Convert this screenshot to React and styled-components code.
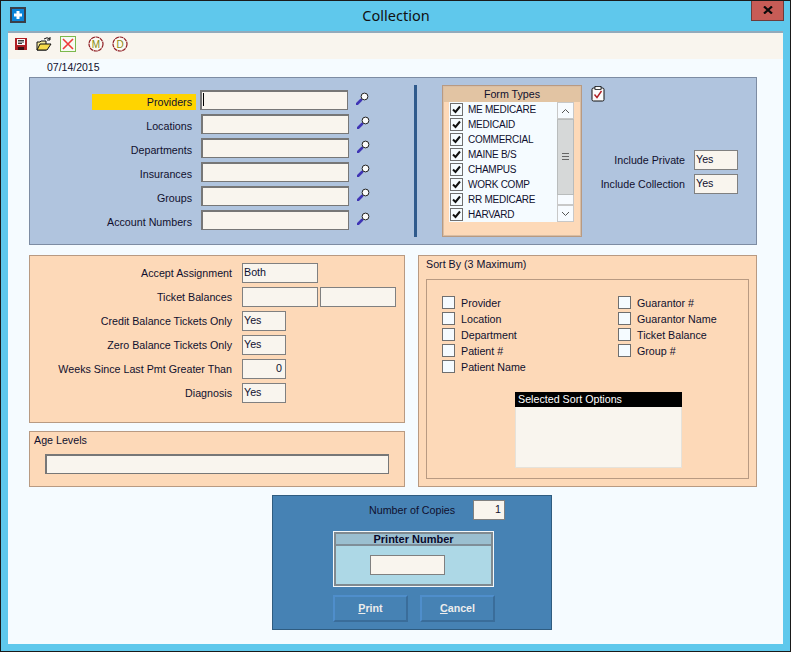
import React from 'react'
import styled, { createGlobalStyle } from 'styled-components'

const Global = createGlobalStyle`
  html, body { margin: 0; padding: 0; background: #5fc8ec; }
  body { font-family: "Liberation Sans", Arial, sans-serif; font-size: 10.7px; color: #10102e; }
  * { box-sizing: border-box; }
`
const Win = styled.div`
  width: 791px;
  height: 652px;
  border: 1px solid #1a1a1a;
  background: #5fc8ec;
  display: flex;
  flex-direction: column;
  overflow: hidden;
`
const TitleBar = styled.div`
  height: 30px;
  flex: none;
  display: flex;
  align-items: flex-start;
  position: relative;
`
const AppIcon = styled.div`
  width: 16px;
  height: 16px;
  margin: 6px 0 0 9px;
  background: #0a84d8;
  border: 2px solid #3a3f48;
  display: flex;
  align-items: center;
  justify-content: center;
`
const Title = styled.div`
  flex: 1;
  text-align: center;
  font: 14.5px "Noto Sans", "Open Sans", sans-serif;
  color: #111;
  padding: 4px 0 0 15px;
`
const CloseBtn = styled.div`
  width: 33px;
  height: 21px;
  margin-right: 6px;
  margin-top: -1px;
  background: #c75c56;
  border: 1px solid #6d3b3b;
  border-top: 0;
  display: flex;
  align-items: center;
  justify-content: center;
`
const Client = styled.div`
  width: 775px;
  height: 613px;
  margin-left: 7px;
  background: #f5fbff;
  border-top: 2px solid #93aabb;
`
const Toolbar = styled.div`
  height: 26px;
  background: #f9f5ee;
  display: flex;
  align-items: flex-start;
  padding: 3px 0 0 5px;
`
const Tool = styled.div`
  width: 16px;
  height: 16px;
  margin-left: ${p => p.$gap || 0}px;
  display: flex;
`
const DateRow = styled.div`
  height: 18px;
  padding: 1px 0 0 39px;
  font-size: 10.5px;
  line-height: 14px;
`
const Main = styled.div`
  width: 728px;
  margin-left: 21px;
`
const BluePanel = styled.div`
  height: 168px;
  background: #b0c4de;
  border: 1px solid #7d8ca3;
  display: flex;
  align-items: flex-start;
`
const ProviderCol = styled.div`
  padding: 12px 0 0 62px;
  display: flex;
  flex-direction: column;
  gap: 4px;
`
const ProviderRow = styled.div`
  height: 20px;
  display: flex;
  align-items: center;
`
const ProviderLabel = styled.div`
  width: 104px;
  height: 16px;
  margin-top: 3px;
  padding-right: 4px;
  line-height: 16px;
  text-align: right;
  background: ${p => (p.$active ? '#ffd400' : 'transparent')};
`
const Field = styled.div`
  width: ${p => p.$w}px;
  height: 20px;
  flex: none;
  background: #f9f5ee;
  border: ${p => (p.$thin ? '1px solid #808080' : '2px solid #777')};
  border-right-width: 1px;
  border-bottom-width: 1px;
  padding: 0 ${p => (p.$right ? 3 : 1)}px;
  line-height: 16px;
  text-align: ${p => (p.$right ? 'right' : 'left')};
  color: #10102e;
  margin-left: ${p => p.$ml || 0}px;
`
const Caret = styled.div`
  width: 1px;
  height: 13px;
  margin-top: 1px;
  background: #000;
`
const LookupIcon = styled.svg`
  width: 13px;
  height: 13px;
  margin-left: 8px;
  margin-top: -3px;
  flex: none;
`
const Divider = styled.div`
  width: 3px;
  height: 152px;
  margin: 7px 0 0 44px;
  background: #2f5a8c;
`
const FormBox = styled.div`
  width: 140px;
  height: 152px;
  margin: 7px 0 0 25px;
  background: #fdd9b8;
  border: 1px solid #b89a82;
  outline: 1px solid #d9bea4;
  outline-offset: -2px;
`
const FormHead = styled.div`
  height: 15px;
  margin: 1px 1px 0;
  background: #e2c4a3;
  text-align: center;
  line-height: 15px;
`
const FormList = styled.div`
  width: 125px;
  height: 120px;
  margin-left: 6px;
  background: #f5fbff;
  position: relative;
  display: flex;
`
const FormRows = styled.div`
  flex: 1;
  padding-left: 1px;
`
const FormRow = styled.div`
  height: 15px;
  padding-top: 1px;
  display: flex;
  align-items: flex-start;
  gap: 5px;
  font-size: 10px;
  letter-spacing: -0.25px;
  line-height: 14px;
`
const Check = styled.div`
  width: 13px;
  height: 13px;
  flex: none;
  border: 1px solid #6f6f6f;
  background: #f5fbff;
  display: flex;
`
const Scroll = styled.div`
  width: 17px;
  display: flex;
  flex-direction: column;
`
const ScrollBtn = styled.div`
  height: ${p => p.$h}px;
  border: 1px solid #c8c8c8;
  background: #f7fbff;
  display: flex;
  align-items: center;
  justify-content: center;
`
const ScrollGap = styled(ScrollBtn)`
  border-top: 0;
`
const Thumb = styled.div`
  height: 76px;
  background: #d6d8d8;
  border: 1px solid #b9bcbc;
  display: flex;
  flex-direction: column;
  align-items: center;
  justify-content: center;
  gap: 1px;
`
const Grip = styled.div`
  width: 7px;
  height: 1px;
  background: #666;
  margin-bottom: 1px;
`
const IncludeCol = styled.div`
  width: 147px;
  margin: 8px 0 0 9px;
  display: flex;
  flex-direction: column;
`
const IncludeRows = styled.div`
  margin-top: 48px;
  display: flex;
  flex-direction: column;
  gap: 4px;
`
const IncludeRow = styled.div`
  display: flex;
  justify-content: flex-end;
  align-items: center;
  gap: 9px;
`
const Middle = styled.div`
  margin-top: 10px;
  display: grid;
  grid-template-columns: 376px 339px;
  column-gap: 13px;
`
const Stack = styled.div`
  display: flex;
  flex-direction: column;
  gap: 8px;
`
const Peach = styled.div`
  height: ${p => p.$h}px;
  background: #fdd9b8;
  border: 1px solid #b89a82;
`
const FilterPanel = styled(Peach)`
  padding-top: 7px;
  display: flex;
  flex-direction: column;
  gap: 4px;
`
const FilterRow = styled.div`
  height: 20px;
  display: flex;
  align-items: center;
`
const FilterLabel = styled.div`
  width: 202px;
  margin-right: 10px;
  text-align: right;
`
const AgeTitle = styled.div`
  padding: 1px 0 0 4px;
  height: 22px;
  line-height: 14px;
`
const SortTitle = styled.div`
  padding: 1px 0 0 7px;
  height: 23px;
  line-height: 14px;
`
const SortInner = styled.div`
  width: 323px;
  height: 200px;
  margin-left: 7px;
  border: 1px solid #b89a82;
  padding: 16px 0 0 15px;
`
const SortGrid = styled.div`
  display: grid;
  grid-template-columns: 176px 1fr;
  height: 80px;
`
const SortCol = styled.div`
  display: flex;
  flex-direction: column;
`
const SortItem = styled.div`
  height: 16px;
  display: flex;
  align-items: flex-start;
  gap: ${p => p.$gap}px;
  line-height: 14px;
`
const Selected = styled.div`
  width: 167px;
  height: 76px;
  margin: 16px 0 0 73px;
  background: #f9f5ee;
  border: 1px solid #e6e2da;
`
const SelectedHead = styled.div`
  height: 15px;
  margin: -1px -1px 0;
  background: #000;
  color: #fff;
  padding-left: 3px;
  line-height: 15px;
`
const PrintPanel = styled.div`
  width: 280px;
  height: 135px;
  margin: 8px 0 0 243px;
  background: #4682b4;
  border: 1px solid #2f5c80;
  padding: 4px 0 0 60px;
`
const CopiesRow = styled.div`
  display: flex;
  align-items: center;
  height: 20px;
`
const CopiesLabel = styled.div`
  width: 104px;
  margin-left: 36px;
`
const PrinterBox = styled.div`
  width: 161px;
  height: 56px;
  margin-top: 11px;
  background: #add8e6;
  border: 1px solid #f4f8fa;
  box-shadow: inset 0 0 0 2px #808a90;
  padding: 2px;
`
const PrinterHead = styled.div`
  height: 12px;
  background: #9bbfd0;
  border-bottom: 2px solid #7f8e98;
  font-size: 11px;
  font-weight: bold;
  text-align: center;
  line-height: 10px;
  color: #08082a;
`
const PrinterBody = styled.div`
  display: flex;
  padding: 9px 0 0 34px;
`
const Buttons = styled.div`
  margin-top: 8px;
  display: flex;
  gap: 12px;
`
const PrintBtn = styled.div`
  width: 75px;
  height: 27px;
  background: #4682b4;
  border: 2px solid #3a6d9a;
  border-top-color: #4f8ecb;
  border-left-color: #4f8ecb;
  color: #ececec;
  font-weight: bold;
  text-align: center;
  line-height: 23px;
  u { text-decoration: underline; }
`

const Lookup = () => (
  <LookupIcon viewBox="0 0 13 13">
    <path d="M1 12 L5 8" stroke="#3f35b5" strokeWidth="2.6" strokeLinecap="round" />
    <circle cx="8.5" cy="4.5" r="3.4" fill="#fbfbfb" stroke="#222" strokeWidth="1" />
  </LookupIcon>
)

const Tick = () => (
  <svg viewBox="0 0 11 11" width="11" height="11">
    <path d="M2 5.5 L4.5 8 L9 2.5" fill="none" stroke="#111" strokeWidth="2" />
  </svg>
)

const Badge = ({ letter }) => (
  <svg viewBox="0 0 16 16" width="16" height="16">
    <circle cx="8" cy="8" r="7" fill="#fbfaf2" stroke="#8e1c22" strokeWidth="1.2" strokeDasharray="4 0.6" />
    <text x="8" y="11.5" textAnchor="middle" fontSize="10" fontFamily="Liberation Sans" fill="#8a8a10">{letter}</text>
  </svg>
)

const formTypes = ['ME MEDICARE', 'MEDICAID', 'COMMERCIAL', 'MAINE B/S', 'CHAMPUS', 'WORK COMP', 'RR MEDICARE', 'HARVARD']
const providers = ['Providers', 'Locations', 'Departments', 'Insurances', 'Groups', 'Account Numbers']
const sortLeft = ['Provider', 'Location', 'Department', 'Patient #', 'Patient Name']
const sortRight = ['Guarantor #', 'Guarantor Name', 'Ticket Balance', 'Group #']

export default function App() {
  return (
    <Win>
      <Global />
      <TitleBar>
        <AppIcon>
          <svg viewBox="0 0 10 10" width="10" height="10">
            <path d="M5 1 V9 M1 5 H9" stroke="#fff" strokeWidth="3" />
          </svg>
        </AppIcon>
        <Title>Collection</Title>
        <CloseBtn>
          <svg viewBox="0 0 10 8" width="10" height="8">
            <path d="M1 0.5 L9 7.5 M9 0.5 L1 7.5" stroke="#0a0a0a" strokeWidth="2.2" />
          </svg>
        </CloseBtn>
      </TitleBar>
      <Client>
        <Toolbar>
          <Tool>
            <svg viewBox="0 0 16 16" width="16" height="16">
              <path d="M2 2 H14 V14 H2 Z" fill="#b01f24" />
              <path d="M4 3 H12 V9 H4 Z" fill="#fbfbfb" />
              <path d="M5 4.5 H11 M5 6 H11 M5 7.5 H9" stroke="#222" strokeWidth="0.9" />
              <path d="M5 11 H11 V14 H5 Z" fill="#3a1012" />
            </svg>
          </Tool>
          <Tool $gap={7}>
            <svg viewBox="0 0 16 16" width="16" height="16">
              <path d="M1 6 H4 L5 5 H10 V14 H1 Z" fill="#f6ea9a" stroke="#111" strokeWidth="1" />
              <path d="M1 14 L4 8 H15 L11 14 Z" fill="#f8dc4a" stroke="#111" strokeWidth="1" />
              <path d="M8 3 Q11 0.5 14 3 M14 1 V4 H11" fill="none" stroke="#111" strokeWidth="1" />
            </svg>
          </Tool>
          <Tool $gap={8}>
            <svg viewBox="0 0 16 16" width="16" height="16">
              <rect x="0.5" y="0.5" width="15" height="15" fill="#f6fbf2" stroke="#7cb84c" />
              <path d="M3 3 L13 13 M13 3 L3 13" stroke="#ee3a3a" strokeWidth="1.6" />
            </svg>
          </Tool>
          <Tool $gap={12}><Badge letter="M" /></Tool>
          <Tool $gap={8}><Badge letter="D" /></Tool>
        </Toolbar>
        <DateRow>07/14/2015</DateRow>
        <Main>
          <BluePanel>
            <ProviderCol>
              {providers.map((name, i) => (
                <ProviderRow key={name}>
                  <ProviderLabel $active={i === 0}>{name}</ProviderLabel>
                  <Field $w={148} $ml={i === 0 ? 4 : 5}>{i === 0 && <Caret />}</Field>
                  <Lookup />
                </ProviderRow>
              ))}
            </ProviderCol>
            <Divider />
            <FormBox>
              <FormHead>Form Types</FormHead>
              <FormList>
                <FormRows>
                  {formTypes.map(t => (
                    <FormRow key={t}>
                      <Check><Tick /></Check>
                      {t}
                    </FormRow>
                  ))}
                </FormRows>
                <Scroll>
                  <ScrollBtn $h={17}>
                    <svg viewBox="0 0 9 6" width="9" height="6"><path d="M1 5 L4.5 1.5 L8 5" fill="none" stroke="#555" /></svg>
                  </ScrollBtn>
                  <Thumb><Grip /><Grip /><Grip /></Thumb>
                  <ScrollGap $h={10} />
                  <ScrollBtn $h={17}>
                    <svg viewBox="0 0 9 6" width="9" height="6"><path d="M1 1 L4.5 4.5 L8 1" fill="none" stroke="#555" /></svg>
                  </ScrollBtn>
                </Scroll>
              </FormList>
            </FormBox>
            <IncludeCol>
              <svg viewBox="0 0 14 16" width="14" height="16">
                <rect x="1" y="2" width="12" height="13" rx="1.5" fill="#fbfbfb" stroke="#111" />
                <rect x="4" y="0.5" width="6" height="3" fill="#fbfbfb" stroke="#111" strokeWidth="0.8" />
                <path d="M3.5 8.5 L6 11.5 L10.5 5" fill="none" stroke="#b01f24" strokeWidth="1.4" />
              </svg>
              <IncludeRows>
                <IncludeRow>Include Private<Field $w={44} $thin>Yes</Field></IncludeRow>
                <IncludeRow>Include Collection<Field $w={44} $thin>Yes</Field></IncludeRow>
              </IncludeRows>
            </IncludeCol>
          </BluePanel>
          <Middle>
            <Stack>
              <FilterPanel $h={168}>
                <FilterRow><FilterLabel>Accept Assignment</FilterLabel><Field $w={76} $thin>Both</Field></FilterRow>
                <FilterRow>
                  <FilterLabel>Ticket Balances</FilterLabel>
                  <Field $w={76} $thin />
                  <Field $w={76} $thin $ml={2} />
                </FilterRow>
                <FilterRow><FilterLabel>Credit Balance Tickets Only</FilterLabel><Field $w={44} $thin>Yes</Field></FilterRow>
                <FilterRow><FilterLabel>Zero Balance Tickets Only</FilterLabel><Field $w={44} $thin>Yes</Field></FilterRow>
                <FilterRow><FilterLabel>Weeks Since Last Pmt Greater Than</FilterLabel><Field $w={44} $thin $right>0</Field></FilterRow>
                <FilterRow><FilterLabel>Diagnosis</FilterLabel><Field $w={44} $thin>Yes</Field></FilterRow>
              </FilterPanel>
              <Peach $h={56}>
                <AgeTitle>Age Levels</AgeTitle>
                <Field $w={344} $ml={15} />
              </Peach>
            </Stack>
            <Peach $h={232}>
              <SortTitle>Sort By (3 Maximum)</SortTitle>
              <SortInner>
                <SortGrid>
                  <SortCol>
                    {sortLeft.map(s => <SortItem key={s} $gap={6}><Check />{s}</SortItem>)}
                  </SortCol>
                  <SortCol>
                    {sortRight.map(s => <SortItem key={s} $gap={6}><Check />{s}</SortItem>)}
                  </SortCol>
                </SortGrid>
                <Selected>
                  <SelectedHead>Selected Sort Options</SelectedHead>
                </Selected>
              </SortInner>
            </Peach>
          </Middle>
          <PrintPanel>
            <CopiesRow>
              <CopiesLabel>Number of Copies</CopiesLabel>
              <Field $w={32} $thin $right>1</Field>
            </CopiesRow>
            <PrinterBox>
              <PrinterHead>Printer Number</PrinterHead>
              <PrinterBody><Field $w={75} $thin /></PrinterBody>
            </PrinterBox>
            <Buttons>
              <PrintBtn><u>P</u>rint</PrintBtn>
              <PrintBtn><u>C</u>ancel</PrintBtn>
            </Buttons>
          </PrintPanel>
        </Main>
      </Client>
    </Win>
  )
}
